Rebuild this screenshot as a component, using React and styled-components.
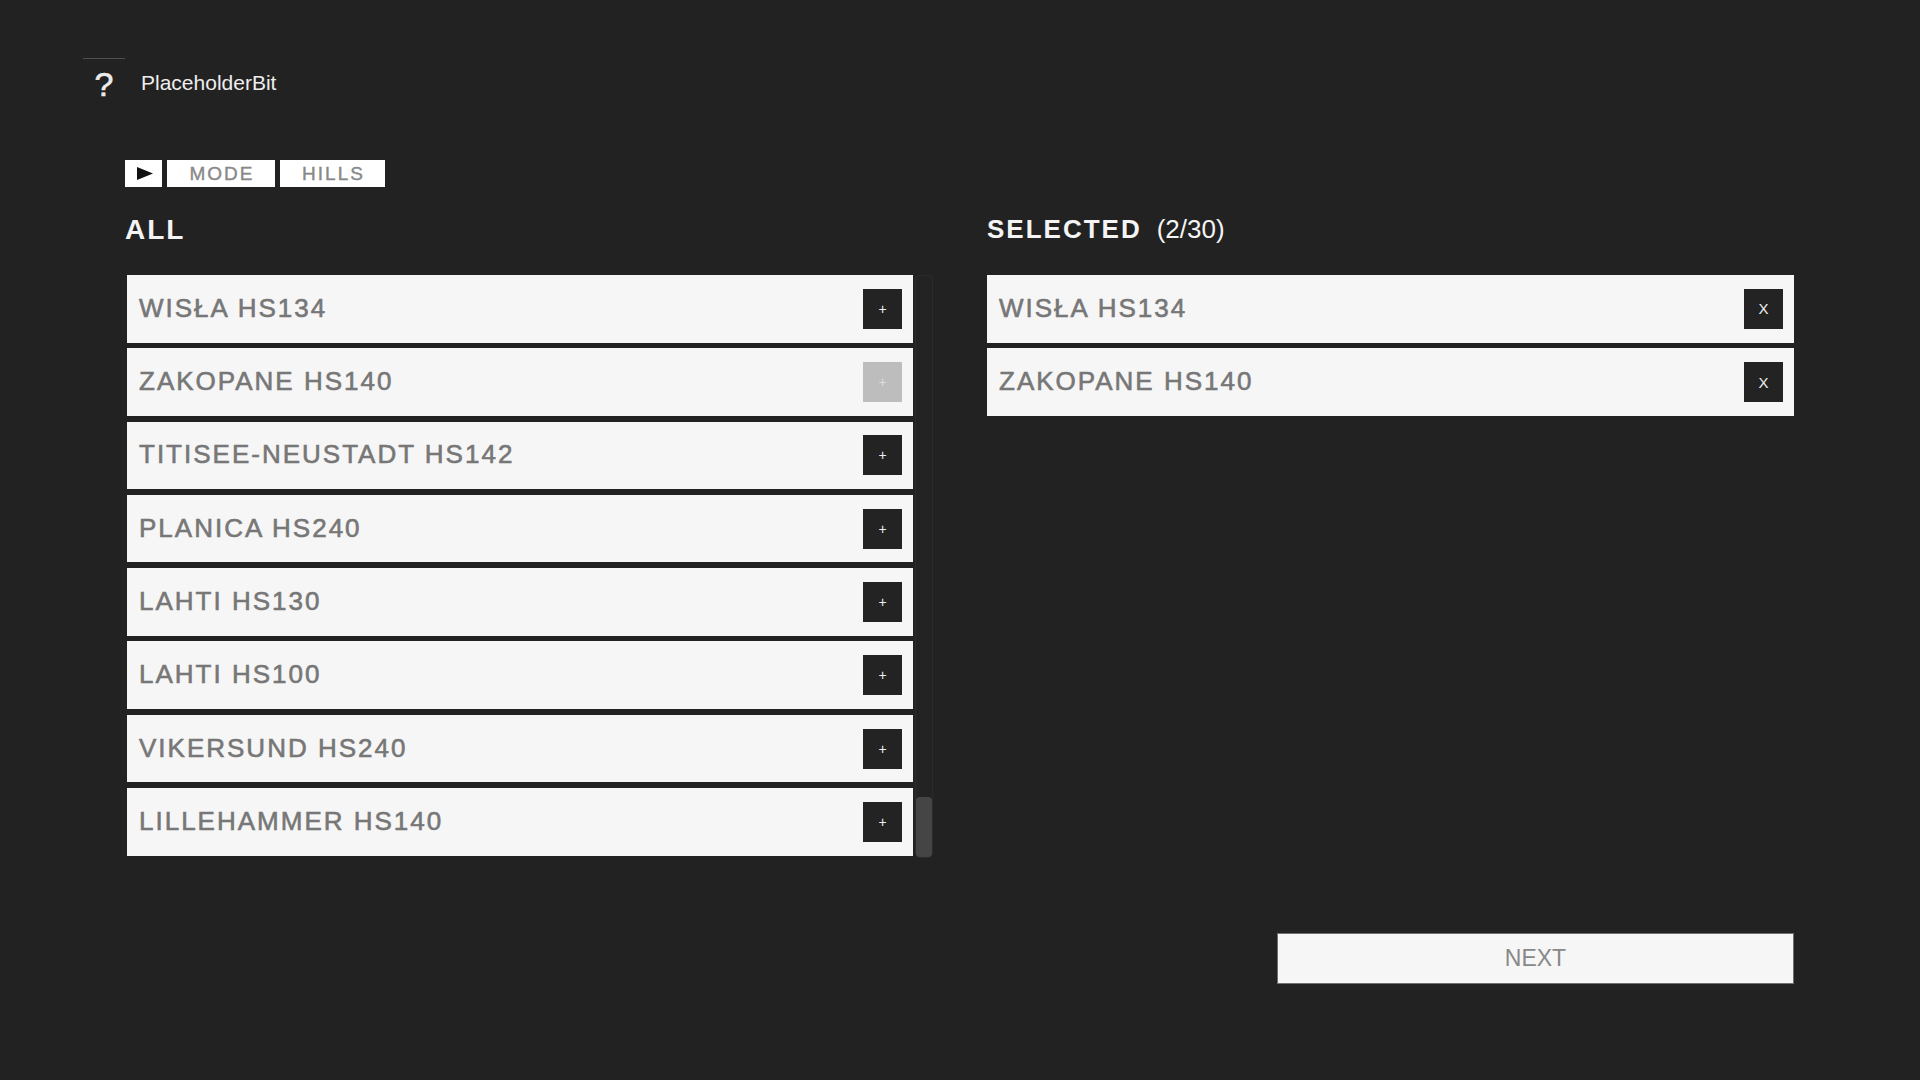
import React from 'react'
import styled, { createGlobalStyle } from 'styled-components';

const GlobalStyle = createGlobalStyle`
    html, body {
        margin: 0;
        padding: 0;
        background: #222222;
        font-family: "Liberation Sans", Arial, sans-serif;
    }
    #root {
        min-height: 100vh;
    }
`;

const hills = [
    { name: 'WISŁA HS134', picked: false },
    { name: 'ZAKOPANE HS140', picked: true },
    { name: 'TITISEE-NEUSTADT HS142', picked: false },
    { name: 'PLANICA HS240', picked: false },
    { name: 'LAHTI HS130', picked: false },
    { name: 'LAHTI HS100', picked: false },
    { name: 'VIKERSUND HS240', picked: false },
    { name: 'LILLEHAMMER HS140', picked: false },
];

const selected = ['WISŁA HS134', 'ZAKOPANE HS140'];

function App() {
    return (
        <PageStyled>
            <GlobalStyle />
            <Header>
                <LogoBox>?</LogoBox>
                <AppName>PlaceholderBit</AppName>
            </Header>

            <Content>
                <Tabs>
                    <PlayTab>
                        <svg width="16" height="13" viewBox="0 0 16 13">
                            <polygon points="0,0 16,6.5 0,13" fill="#111" />
                        </svg>
                    </PlayTab>
                    <Tab width={108}>MODE</Tab>
                    <Tab width={105}>HILLS</Tab>
                </Tabs>

                <Columns>
                    <Column width={808}>
                        <HeadingRow>
                            <Heading size={28}>ALL</Heading>
                        </HeadingRow>
                        <ListWrap>
                            <List width={786} offset={2}>
                                {hills.map(h => (
                                    <Row key={h.name}>
                                        <Label>{h.name}</Label>
                                        <SquareButton disabled={h.picked} size={14}>+</SquareButton>
                                    </Row>
                                ))}
                            </List>
                            <ScrollTrack>
                                <Thumb />
                            </ScrollTrack>
                        </ListWrap>
                    </Column>

                    <Column width={807}>
                        <HeadingRow>
                            <Heading size={26}>
                                SELECTED<Count>(2/30)</Count>
                            </Heading>
                        </HeadingRow>
                        <List width={807}>
                            {selected.map(name => (
                                <Row key={name}>
                                    <Label>{name}</Label>
                                    <SquareButton size={15}>X</SquareButton>
                                </Row>
                            ))}
                        </List>
                    </Column>
                </Columns>

                <Footer>
                    <NextButton>NEXT</NextButton>
                </Footer>
            </Content>
        </PageStyled>
    )
}

const PageStyled = styled.div`
    padding-top: 58px;
    color: #eeeeee;
`;

const Header = styled.div`
    display: flex;
    align-items: center;
    padding-left: 83px;
`;

const LogoBox = styled.div`
    width: 42px;
    height: 50px;
    border-top: 1px solid #4e4e4e;
    text-align: center;
    font-size: 34px;
    font-weight: 400;
    line-height: 50px;
    color: #ececec;
    -webkit-text-stroke: 0.6px #ececec;
`;

const AppName = styled.div`
    margin-left: 16px;
    margin-top: -2px;
    font-size: 21px;
    line-height: 21px;
    color: #eeeeee;
`;

const Content = styled.div`
    margin-left: 125px;
    width: 1669px;
`;

const Tabs = styled.div`
    display: flex;
    gap: 5px;
    margin-top: 51px;
    height: 27px;
`;

const PlayTab = styled.div`
    width: 37px;
    height: 27px;
    background: #ffffff;
    display: flex;
    align-items: center;
    justify-content: center;
    svg {
        margin-left: 3px;
    }
`;

const Tab = styled.div`
    width: ${p => p.width}px;
    height: 27px;
    background: #ffffff;
    color: #888888;
    font-size: 19px;
    letter-spacing: 2px;
    -webkit-text-stroke: 0.4px #888888;
    display: flex;
    align-items: center;
    justify-content: center;
    padding-left: 2px;
    box-sizing: border-box;
`;

const Columns = styled.div`
    display: flex;
    gap: 54px;
`;

const Column = styled.div`
    width: ${p => p.width}px;
    display: flex;
    flex-direction: column;
`;

const HeadingRow = styled.div`
    height: 88px;
    padding-top: 29px;
    box-sizing: border-box;
`;

const Heading = styled.h2`
    margin: 0;
    font-size: ${p => p.size}px;
    line-height: 1;
    font-weight: 700;
    letter-spacing: 2px;
    color: #f4f4f4;
`;

const Count = styled.span`
    margin-left: 15px;
    font-weight: 400;
    letter-spacing: 0;
`;

const ListWrap = styled.div`
    display: flex;
    gap: 2px;
`;

const List = styled.div`
    width: ${p => p.width}px;
    display: flex;
    flex-direction: column;
    gap: 5.8px;
    margin-left: ${p => p.offset || 0}px;
`;

const Row = styled.div`
    height: 67.5px;
    background: #f6f6f6;
    display: flex;
    align-items: center;
    justify-content: space-between;
    padding: 0 11px 0 12px;
    box-sizing: border-box;
`;

const Label = styled.span`
    font-size: 26px;
    line-height: 1;
    letter-spacing: 2px;
    color: #777777;
    -webkit-text-stroke: 0.6px #777777;
    margin-top: -2px;
`;

const SquareButton = styled.div`
    width: 39px;
    height: 40px;
    background: ${p => (p.disabled ? '#bdbdbd' : '#232323')};
    color: ${p => (p.disabled ? '#dedede' : '#eeeeee')};
    font-size: ${p => p.size}px;
    display: flex;
    align-items: center;
    justify-content: center;
`;

const ScrollTrack = styled.div`
    position: relative;
    width: 18px;
    height: 583px;
    border: 1px solid #2b2b2b;
    border-radius: 4px;
    box-sizing: border-box;
    background: #232323;
`;

const Thumb = styled.div`
    position: absolute;
    left: 0;
    right: 0;
    bottom: 0;
    height: 60px;
    border-radius: 4px;
    background: #454545;
`;

const Footer = styled.div`
    display: flex;
    justify-content: flex-end;
    margin-top: 75px;
`;

const NextButton = styled.div`
    width: 517px;
    height: 51px;
    background: #f6f6f6;
    border: 1px solid #707070;
    box-sizing: border-box;
    color: #888888;
    font-size: 23px;
    display: flex;
    align-items: center;
    justify-content: center;
`;

export default App;
